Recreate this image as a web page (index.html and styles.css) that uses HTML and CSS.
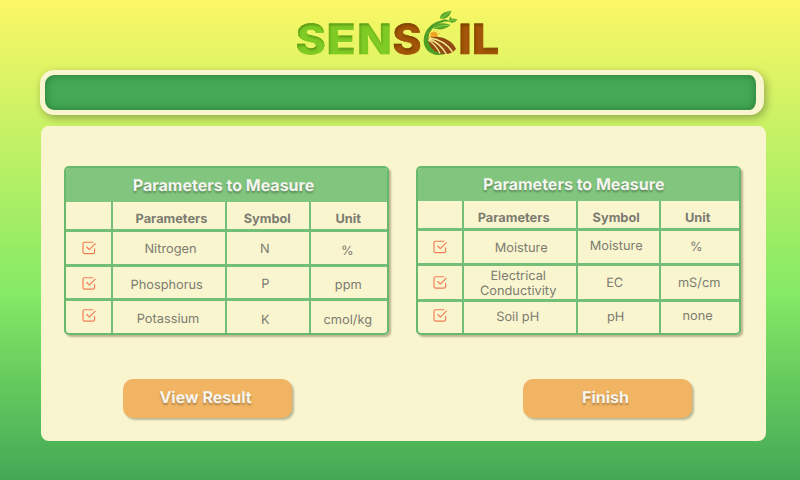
FILE: index.html
```html
<!DOCTYPE html>
<html lang="en">
<head>
<meta charset="utf-8">
<title>Sensoil</title>
<link rel="stylesheet" href="styles.css">
</head>
<body>
<svg width="0" height="0" class="defs">
  <symbol id="check" viewBox="0 0 14 14">
    <path d="M10.8 1.2H2.4A1.4 1.4 0 0 0 1 2.6v8.6a1.4 1.4 0 0 0 1.4 1.4h8.8a1.4 1.4 0 0 0 1.4-1.4V7.8M4.8 6l2.5 2.6 6-6"/>
  </symbol>
</svg>
<header class="brand">
  <svg class="logo" viewBox="0 0 210 60" width="210" height="60">
    <defs>
      <filter id="inner" x="-10%" y="-10%" width="120%" height="120%">
        <feOffset in="SourceAlpha" dx="1" dy="1.5"/>
        <feGaussianBlur stdDeviation="1.3" result="b"/>
        <feComposite in="SourceAlpha" in2="b" operator="out" result="s"/>
        <feFlood flood-color="#102800" flood-opacity=".5"/>
        <feComposite in2="s" operator="in" result="c"/>
        <feMerge><feMergeNode in="SourceGraphic"/><feMergeNode in="c"/></feMerge>
      </filter>
    </defs>
    <g class="word" filter="url(#inner)">
      <g class="green">
        <text x="2.8" y="48.6" textLength="30" lengthAdjust="spacingAndGlyphs">S</text>
        <text x="33.6" y="48.6" textLength="29" lengthAdjust="spacingAndGlyphs">E</text>
        <text x="64.2" y="48.6" textLength="34.5" lengthAdjust="spacingAndGlyphs">N</text>
      </g>
      <g class="brown">
        <text x="99.6" y="48.6" textLength="29" lengthAdjust="spacingAndGlyphs">S</text>
        <text x="165.2" y="48.6" textLength="13.5" lengthAdjust="spacingAndGlyphs">I</text>
        <text x="178.8" y="48.6" textLength="27.5" lengthAdjust="spacingAndGlyphs">L</text>
      </g>
    </g>
    <g transform="translate(97 0) scale(.3333)">
      <path fill="#4f9f25" d="M171 145C137 160 101 141 101 107C101 77 124 53 151 47C164 42 171 42 181 50C163 47 149 53 139 61C121 75 115 88 116 105C117 128 140 143 171 145Z"/>
      <path fill="#5aa829" d="M150 41C150 25 163 20 184 17C182 31 171 43 150 41ZM176 47L181 34L186 42C193 38 197 42 202 44C194 54 184 57 176 47ZM130 69C140 52 161 52 182 60C167 74 145 77 130 69Z"/>
      <path class="vein" d="M151 41L179 21M132 69Q151 60 177 61M177 47L197 45"/>
      <path class="rays" d="M115 84l34 14M121 78l23 24M132 74v27M143 78l-23 24M149 85l-34 11"/>
      <circle cx="132" cy="91" r="10" fill="#efa125"/>
      <path fill="#914b12" d="M114 102C132 88 181 96 198 131C190 143 177 148 162 147C134 145 117 128 114 102Z"/>
      <path class="furrow" d="M118 99Q163 104 188 141M116 102Q150 113 169 147M115 105Q138 120 150 145"/>
    </g>
  </svg>
</header>
<div class="bar"></div>
<main class="panel">
  <div class="tables">
    <section class="table nutrients">
      <h2>Parameters to Measure</h2>
      <div class="grid">
        <b></b><b><span>Parameters</span></b><b><span>Symbol</span></b><b><span>Unit</span></b>
        <div><svg><use href="#check"/></svg></div><div><span>Nitrogen</span></div><div><span>N</span></div><div><span>%</span></div>
        <div><svg><use href="#check"/></svg></div><div><span>Phosphorus</span></div><div><span>P</span></div><div><span>ppm</span></div>
        <div><svg><use href="#check"/></svg></div><div><span>Potassium</span></div><div><span>K</span></div><div><span>cmol/kg</span></div>
      </div>
    </section>
    <section class="table soil">
      <h2>Parameters to Measure</h2>
      <div class="grid">
        <b></b><b><span>Parameters</span></b><b><span>Symbol</span></b><b><span>Unit</span></b>
        <div><svg><use href="#check"/></svg></div><div><span>Moisture</span></div><div><span>Moisture</span></div><div><span>%</span></div>
        <div><svg><use href="#check"/></svg></div><div><span>Electrical<br>Conductivity</span></div><div><span>EC</span></div><div><span>mS/cm</span></div>
        <div><svg><use href="#check"/></svg></div><div><span>Soil pH</span></div><div><span>pH</span></div><div><span>none</span></div>
      </div>
    </section>
  </div>
  <div class="actions">
    <button>View Result</button>
    <button>Finish</button>
  </div>
</main>
</body>
</html>
```
FILE: styles.css
```css
* { box-sizing: border-box; }
body {
  margin: 0;
  width: 800px;
  height: 480px;
  overflow: hidden;
  font-family: Inter, "Liberation Sans", sans-serif;
  text-rendering: geometricPrecision;
  background: linear-gradient(#fbf765 0%, #85ea65 61%, #43a855 100%);
}
.defs { display: block; }
.brand { height: 70px; padding: 5px 0 0 293px; }
.logo { display: block; }
.word { font-weight: 800; font-size: 41.5px; stroke-width: .6; }
.green { fill: #7ecb25; stroke: #7ecb25; }
.brown { fill: #a2540f; stroke: #a2540f; }
.vein { stroke: #a4d957; stroke-width: 2; fill: none; }
.rays { stroke: #efb52d; stroke-width: 3; }
.furrow { stroke: #f3e88c; stroke-width: 4.2; fill: none; }
.bar {
  width: 724px;
  height: 45px;
  margin-left: 40px;
  border: 5px solid #f9f5cf;
  border-right-width: 8px;
  border-radius: 14px;
  background: #43a956;
  box-shadow: 2px 3px 8px rgba(0, 0, 0, .3), inset 0 0 8px rgba(0, 50, 0, .4);
}
.panel {
  width: 724.7px;
  height: 314.6px;
  margin: 11px 0 0 41px;
  padding: 40px 24.5px 0 23px;
  border-radius: 8px;
  background: #f9f5cf;
}
.tables { display: flex; justify-content: space-between; }
.table {
  width: 325px;
  height: 169px;
  border: 2.5px solid #66b96d;
  border-radius: 5px;
  overflow: hidden;
  box-shadow: 2px 2px 2px rgba(80, 60, 20, .35);
}
h2 {
  margin: 0;
  height: 34px;
  padding-right: 6px;
  font-size: 16px;
  font-weight: 700;
  line-height: 34px;
  text-align: center;
  color: #f5f5f0;
  background: #81c57e;
  text-shadow: 0 2px 2px rgba(0, 0, 0, .3);
}
.grid {
  display: grid;
  grid-template-columns: 47px 114px 83.5px 1fr;
  grid-template-rows: 30px 35px 34px 32px;
  font-size: 12.8px;
  line-height: 15px;
  color: #7c7c70;
  text-align: center;
}
.soil h2 { height: 33px; line-height: 33px; padding-right: 10px; }
.soil .grid {
  grid-template-columns: 46px 114px 83px 1fr;
  grid-template-rows: 30px 35px 36px 31px;
}
.grid > * {
  display: flex;
  align-items: center;
  justify-content: center;
  border: solid #74bf78;
  border-width: 0 2.5px 3px 0;
}
.grid > :nth-child(4n) { border-right: 0; }
.grid > :nth-child(n+13) { border-bottom: 0; }
.grid svg {
  width: 14px;
  height: 14px;
  fill: none;
  stroke: #f47c55;
  stroke-width: 1.15;
  stroke-linecap: round;
  stroke-linejoin: round;
}

.grid b span { translate: 2.5px 3.5px; }
.grid b:nth-child(n+3) span { translate: -.5px 3.5px; }
.nutrients :nth-child(6) span { translate: 1.5px 1px; }
.nutrients :nth-child(7) span { translate: -3px 1px; }
.nutrients :nth-child(8) span { translate: -1.5px 3px; }
.nutrients :nth-child(9) svg { translate: 0 .5px; }
.nutrients :nth-child(10) span { translate: -2.3px 2.7px; }
.nutrients :nth-child(11) span { translate: -2.5px 2px; }
.nutrients :nth-child(12) span { translate: -.5px 3px; }
.nutrients :nth-child(13) svg { translate: 0 -1.5px; }
.nutrients :nth-child(14) span { translate: -1px 1.8px; }
.nutrients :nth-child(15) span { translate: -2.5px 2.5px; }
.nutrients :nth-child(16) span { translate: -1px 2.5px; }
.soil b:nth-child(2) span { translate: -6.5px 4px; }
.soil b:nth-child(3) span { translate: -2.5px 4px; }
.soil b:nth-child(4) span { translate: -2.5px 4px; }
.soil :nth-child(6) span { translate: 1px .5px; }
.soil :nth-child(7) span { translate: -2.5px -.6px; }
.soil :nth-child(8) span { translate: -4px -.3px; }
.soil :nth-child(9) svg { translate: 0 -.5px; }
.soil :nth-child(10) span { translate: -2px .9px; }
.soil :nth-child(11) span { translate: -4px .6px; }
.soil :nth-child(12) span { translate: -1px 1px; }
.soil :nth-child(13) svg { translate: 0 -2.5px; }
.soil :nth-child(14) span { translate: -2.5px 0; }
.soil :nth-child(15) span { translate: -3px -.3px; }
.soil :nth-child(16) span { translate: -2.5px -1px; }

.actions { display: flex; gap: 231px; padding: 44px 0 0 59px; }
button {
  width: 169px;
  height: 38.5px;
  padding: 0 4px 2px 0;
  border: 0;
  border-radius: 10px;
  font: 700 16px Inter, "Liberation Sans", sans-serif;
  text-rendering: inherit;
  color: #f7f5ee;
  background: #f0b463;
  box-shadow: 2px 2px 2px rgba(60, 60, 30, .32);
  text-shadow: 0 2px 2px rgba(0, 0, 0, .28);
}
```
